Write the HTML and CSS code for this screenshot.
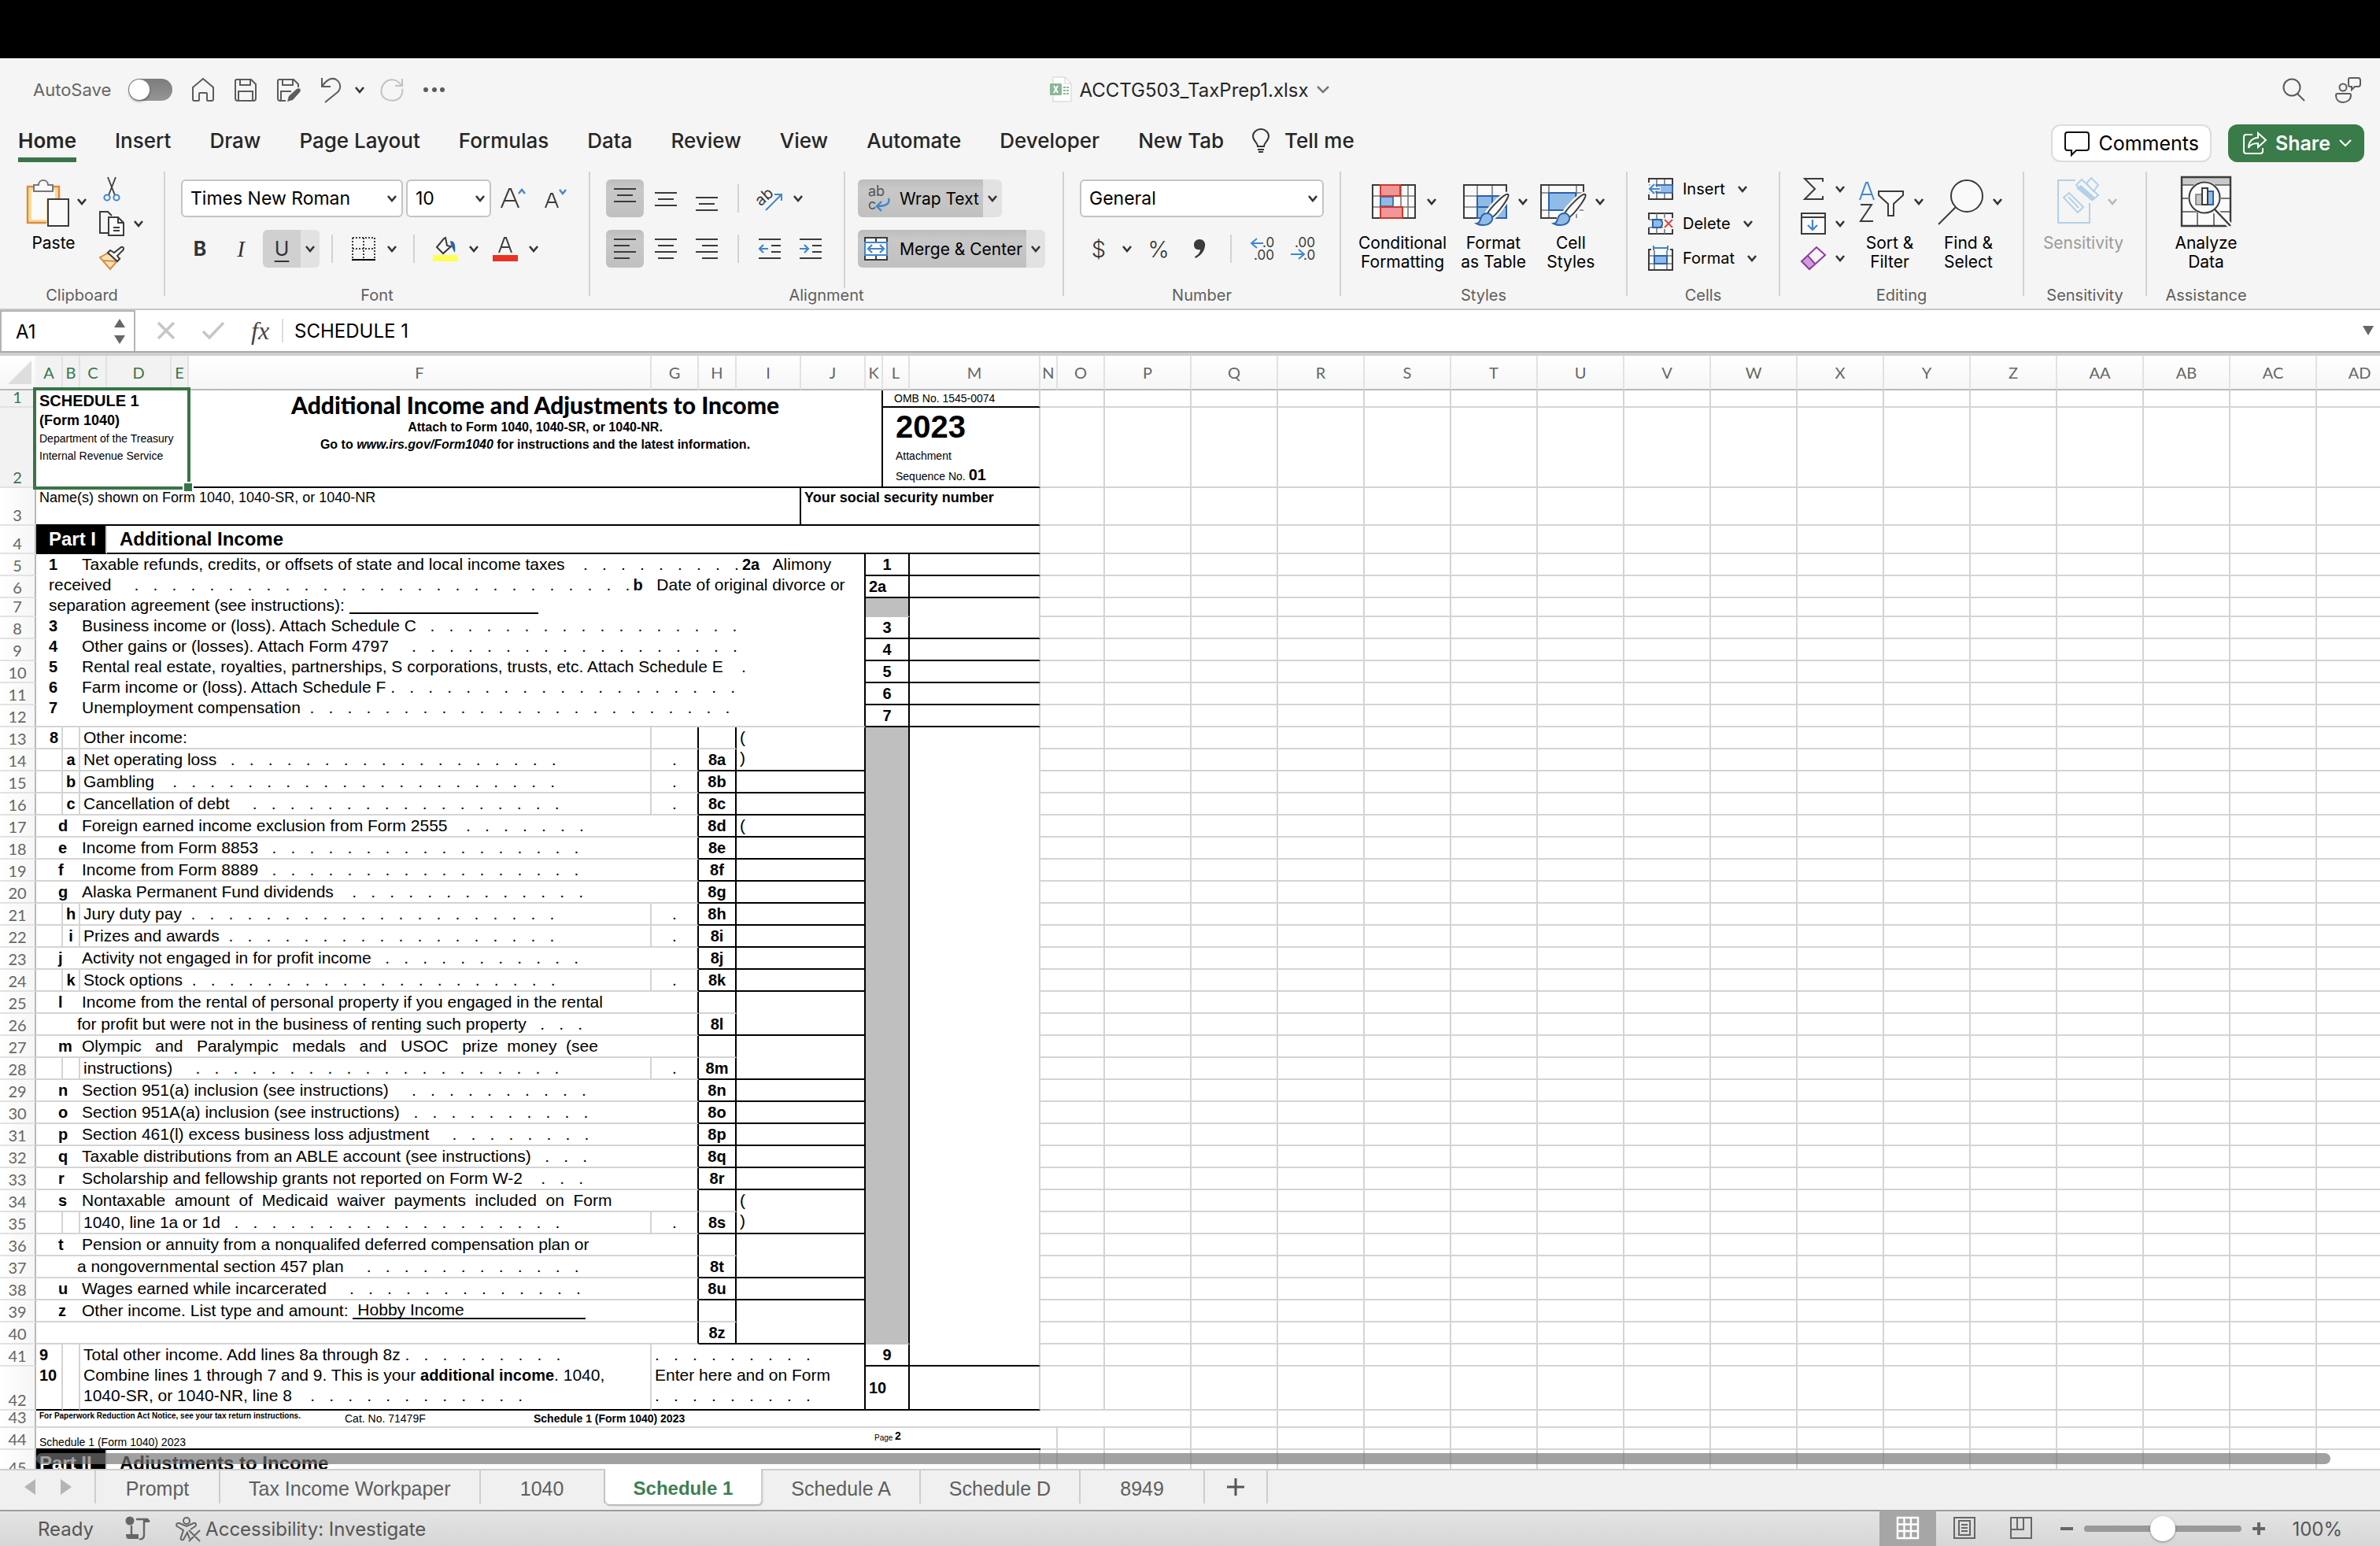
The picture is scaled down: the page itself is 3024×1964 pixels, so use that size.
FILE: index.html
```html
<!DOCTYPE html>
<html lang="en">
<head>
    <meta charset="UTF-8">
    <meta name="viewport" content="width=device-width, initial-scale=1.0">
    <title>ACCTG503_TaxPrep1.xlsx</title>
    <link rel="stylesheet" href="styles.css">
</head>
<body>
    <svg class="defs" aria-hidden="true">
        <symbol id="chev" viewBox="0 0 24 24"><path d="M7 9l5 6 5-6" fill="none" stroke="currentColor" stroke-width="2.6"/></symbol>
        <symbol id="brush" viewBox="0 0 60 64">
            <path d="M57 23c3 2-14 25-20 29l-6-5c4-7 22-26 26-24z" fill="#fafafa" stroke="#f5f5f5" stroke-width="7"/>
            <path d="M57 23c4 2-14 25-20 29l-6-5c4-7 22-26 26-24z" fill="#fafafa" stroke="#3b3b3b" stroke-width="2"/>
            <path d="M31 47c4 0 7 4 6 8-2 7-12 9-20 5 5-1 4-4 6-8 1-3 4-5 8-5z" fill="#90bbe6" stroke="#2a62ad" stroke-width="2"/>
        </symbol>
    </svg>

    <div class="notch"></div>

    <header class="titlebar">
        <div class="quick">
            <label for="autosave">AutoSave</label>
            <input type="checkbox" id="autosave" class="toggle">
            <button aria-label="Home"><svg width="30" height="32" viewBox="0 0 30 32"><path d="M2 13L15 2l13 11v15a2 2 0 0 1-2 2h-5a1 1 0 0 1-1-1v-8a1 1 0 0 0-1-1h-8a1 1 0 0 0-1 1v8a1 1 0 0 1-1 1H4a2 2 0 0 1-2-2z"/></svg></button>
            <button aria-label="Save"><svg width="30" height="32" viewBox="0 0 30 32"><path d="M4 3h18l6 6v18a3 3 0 0 1-3 3H5a3 3 0 0 1-3-3V5a2 2 0 0 1 2-2zM8 3v7h13V3M6 30V18h18v12"/></svg></button>
            <button aria-label="Save as"><svg width="32" height="32" viewBox="0 0 32 32"><path d="M12 30H5a3 3 0 0 1-3-3V5a2 2 0 0 1 2-2h18l6 6v4M8 3v7h13V3M6 30V18h13"/><path d="M14 31l2-7 10-9c4-2 6 1 4 4l-9 10z" fill="#5c5c5c" stroke="none"/></svg></button>
            <button aria-label="Undo"><svg width="28" height="34" viewBox="0 0 28 34"><path d="M2 2v11h11M2 13C8 4 14 1 20 4c6 4 7 11 2 16L6 33"/></svg></button>
            <button aria-label="Undo list" class="tight"><svg width="24" height="24"><use href="#chev"/></svg></button>
            <button aria-label="Redo" class="off"><svg width="30" height="32" viewBox="0 0 30 32"><path d="M19 11h9V2M27 11C22 2 12 1 6 7S0 23 6 27s15 4 20-2c2-3 3-6 2-10"/></svg></button>
            <button aria-label="More"><svg width="30" height="8" viewBox="0 0 30 8"><g fill="#5c5c5c" stroke="none"><circle cx="4" cy="4" r="3"/><circle cx="15" cy="4" r="3"/><circle cx="25" cy="4" r="3"/></g></svg></button>
        </div>
        <div class="filename">
            <svg width="28" height="34" viewBox="0 0 28 34"><path d="M4 1h15l8 8v23H4z" fill="#fff" stroke="#d0d0d0"/><path d="M19 1v8h8" fill="none" stroke="#d0d0d0"/><rect y="9" width="15" height="15" rx="1" fill="#8ab897"/><path d="M5 12l5 9M10 12l-5 9" stroke="#fff" stroke-width="2"/><path d="M17 13h3v2h-3zM21 13h3v2h-3zM17 17h3v2h-3zM21 17h3v2h-3zM17 21h3v2h-3zM21 21h3v2h-3z" fill="#8ab897"/></svg>
            <span>ACCTG503_TaxPrep1.xlsx</span>
            <svg width="18" height="14" viewBox="0 0 18 14"><path d="M2 3l7 7 7-7" fill="none" stroke="#777" stroke-width="2.5"/></svg>
        </div>
        <div class="corner">
            <button aria-label="Search"><svg width="30" height="32" viewBox="0 0 30 32"><circle cx="12" cy="13" r="10.5"/><path d="M19 21l9 9"/></svg></button>
            <button aria-label="Presence"><svg width="34" height="34" viewBox="0 0 34 34"><circle cx="11" cy="14" r="4.5"/><path d="M4 22h15a2 2 0 0 1 2 2c0 5-4 9-10 9S2 29 2 24a2 2 0 0 1 2-2zM20 2h10a3 3 0 0 1 3 3v5a3 3 0 0 1-3 3h-4l-4 4v-4h-2a2 2 0 0 1-2-2V4a2 2 0 0 1 2-2z"/></svg></button>
        </div>
    </header>

    <nav class="tabs">
        <a href="#" class="active">Home</a>
        <a href="#">Insert</a>
        <a href="#">Draw</a>
        <a href="#">Page Layout</a>
        <a href="#">Formulas</a>
        <a href="#">Data</a>
        <a href="#">Review</a>
        <a href="#">View</a>
        <a href="#">Automate</a>
        <a href="#">Developer</a>
        <a href="#">New Tab</a>
        <a href="#" class="tell"><svg width="24" height="32" viewBox="0 0 24 32"><path d="M8 23c0-5-6-7-6-13a10 9 0 0 1 20 0c0 6-6 8-6 13zM8 27h8M9 30h6" fill="none" stroke="#333" stroke-width="2"/></svg>Tell me</a>
        <button class="comments"><svg width="34" height="32" viewBox="0 0 34 32"><path d="M5 2h24a3 3 0 0 1 3 3v17a3 3 0 0 1-3 3H16l-6 6v-6H5a3 3 0 0 1-3-3V5a3 3 0 0 1 3-3z" fill="none" stroke="#111" stroke-width="2"/></svg>Comments</button>
        <button class="share"><svg width="32" height="30" viewBox="0 0 32 30"><path d="M13 4H5a3 3 0 0 0-3 3v18a3 3 0 0 0 3 3h18a3 3 0 0 0 3-3v-4M20 2l10 9-10 9v-5c-6 0-10 1-12 6 0-8 5-13 12-13z" fill="none" stroke="#fff" stroke-width="2"/></svg>Share<svg width="18" height="14" viewBox="0 0 18 14"><path d="M2 3l7 7 7-7" fill="none" stroke="#fff" stroke-width="2"/></svg></button>
    </nav>

    <div class="ribbon">
        <section class="group g-clipboard">
            <div class="controls">
                <button class="big">
                    <span class="pic"><svg width="54" height="64" viewBox="0 0 54 64"><path d="M1 13h40v46H1z" fill="#f3dc97"/><path d="M25 59H1V13h9M34 13h7v15" fill="none" stroke="#de8a3e" stroke-width="2.4"/><path d="M6 18h30v10H25v27H6z" fill="#fafafa"/><path d="M9 11h6c0-8 12-8 12 0h6v8H9z" fill="#fafafa" stroke="#777" stroke-width="2"/><path d="M27 29h26v34H27z" fill="#fafafa" stroke="#3b3b3b" stroke-width="2"/></svg><svg width="24" height="24"><use href="#chev"/></svg></span>
                    <span class="cap">Paste</span>
                </button>
                <div class="stack">
                    <button aria-label="Cut"><svg width="32" height="32" viewBox="0 0 32 32"><path d="M11 1l9 23M21 1l-9 23" fill="none" stroke="#3b3b3b" stroke-width="1.8"/><circle cx="10" cy="27" r="3.6" fill="none" stroke="#3f87cb" stroke-width="2"/><circle cx="22" cy="27" r="3.6" fill="none" stroke="#3f87cb" stroke-width="2"/></svg></button>
                    <button aria-label="Copy"><svg width="32" height="32" viewBox="0 0 32 32"><g fill="none" stroke="#3b3b3b" stroke-width="2"><path d="M11 28H1V1h10l5 5"/><path d="M12 8h12l7 7v16H12z" fill="#fafafa"/><path d="M24 8v7h7M18 21h8M18 25h8"/></g></svg><svg width="24" height="24"><use href="#chev"/></svg></button>
                    <button aria-label="Format painter"><svg width="32" height="32" viewBox="0 0 32 32"><path d="M10 10l-9 5 13 15 12-14z" fill="#f8e3b8" stroke="#de8a3e" stroke-width="2"/><path d="M5 19l17 1" stroke="#de8a3e" stroke-width="2"/><path d="M11 9l3-3 5 3 9-7c3-1 4 2 2 4l-7 7 3 4-3 3z" fill="#fafafa" stroke="#3b3b3b" stroke-width="2"/></svg></button>
                </div>
            </div>
            <h2>Clipboard</h2>
        </section>
        <i class="rule"></i>
        <section class="group g-font">
            <div class="controls rows">
                <div class="row">
                    <span class="field font-name"><select aria-label="Font"><option>Times New Roman</option></select><svg width="24" height="24"><use href="#chev"/></svg></span>
                    <span class="field font-size"><select aria-label="Font size"><option>10</option></select><svg width="24" height="24"><use href="#chev"/></svg></span>
                    <button class="tool" aria-label="Grow font"><svg width="32" height="30" viewBox="0 0 32 30"><path d="M1 27L11 3h2l10 24M5 18h14" fill="none" stroke="#3b3b3b" stroke-width="2"/><path d="M23 9l4-5 4 5" fill="none" stroke="#3f87cb" stroke-width="2.4"/></svg></button>
                    <button class="tool" aria-label="Shrink font"><svg width="32" height="30" viewBox="0 0 32 30"><path d="M5 27l7-18h2l7 18M8 20h10" fill="none" stroke="#3b3b3b" stroke-width="2"/><path d="M23 4l4 5 4-5" fill="none" stroke="#3f87cb" stroke-width="2.4"/></svg></button>
                </div>
                <div class="row">
                    <button class="tool bold">B</button>
                    <button class="tool italic">I</button>
                    <span class="split soft"><button class="tool underline">U</button><button class="drop" aria-label="Underline styles"><svg width="24" height="24"><use href="#chev"/></svg></button></span>
                    <i class="bar"></i>
                    <span class="split"><button class="tool" aria-label="Borders"><svg width="30" height="30" viewBox="0 0 30 30"><path d="M1 1h28M1 15h28M1 1v26M15 1v26M29 1v26" fill="none" stroke="#3b3b3b" stroke-width="2" stroke-dasharray="2 2"/><path d="M0 29h30" stroke="#000" stroke-width="2"/></svg></button><button class="drop" aria-label="More borders"><svg width="24" height="24"><use href="#chev"/></svg></button></span>
                    <i class="bar"></i>
                    <span class="split"><button class="tool" aria-label="Fill color"><svg width="32" height="32" viewBox="0 0 32 32"><path d="M5 14L14 3l2-1 2 10 5 1-10 9z" fill="#fafafa" stroke="#3b3b3b" stroke-width="2"/><path d="M22 6c6 0 7 6 6 15-2-3-5-8-6-15z" fill="#2a62ad"/><path d="M0 24h32v8H0z" fill="#ffff54"/></svg></button><button class="drop" aria-label="More fills"><svg width="24" height="24"><use href="#chev"/></svg></button></span>
                    <span class="split"><button class="tool" aria-label="Font color"><svg width="32" height="32" viewBox="0 0 32 32"><path d="M8 21L15 2h2l7 19M11 14h10" fill="none" stroke="#3b3b3b" stroke-width="2"/><path d="M0 24h32v8H0z" fill="#e93323"/></svg></button><button class="drop" aria-label="More colors"><svg width="24" height="24"><use href="#chev"/></svg></button></span>
                </div>
            </div>
            <h2>Font</h2>
        </section>
        <i class="rule"></i>
        <section class="group g-align">
            <div class="controls">
                <div class="rows align-part">
                    <div class="row">
                        <button class="tool on" aria-label="Top align"><svg width="28" height="30" viewBox="0 0 28 30"><path d="M0 3h28M4 11h20M0 19h28" stroke="#3b3b3b" stroke-width="2"/></svg></button>
                        <button class="tool" aria-label="Middle align"><svg width="28" height="30" viewBox="0 0 28 30"><path d="M0 8h28M4 16h20M0 24h28" stroke="#3b3b3b" stroke-width="2"/></svg></button>
                        <button class="tool" aria-label="Bottom align"><svg width="28" height="36" viewBox="0 0 28 36"><path d="M0 17h28M4 25h20M0 33h28" stroke="#3b3b3b" stroke-width="2"/></svg></button>
                        <i class="bar"></i>
                        <span class="split"><button class="tool" aria-label="Orientation"><svg width="34" height="32" viewBox="0 0 34 32"><text x="3" y="24" transform="rotate(-42 8 22)" font-family="Inter, sans-serif" font-size="20" fill="#3b3b3b">ab</text><path d="M12 31L32 11M23 11h9v8" fill="none" stroke="#3f87cb" stroke-width="2"/></svg></button><button class="drop" aria-label="More orientations"><svg width="24" height="24"><use href="#chev"/></svg></button></span>
                    </div>
                    <div class="row">
                        <button class="tool on" aria-label="Align left"><svg width="28" height="30" viewBox="0 0 28 30"><path d="M0 3h28M0 11h20M0 19h28M0 27h20" stroke="#3b3b3b" stroke-width="2"/></svg></button>
                        <button class="tool" aria-label="Align center"><svg width="28" height="30" viewBox="0 0 28 30"><path d="M0 3h28M4 11h20M0 19h28M4 27h20" stroke="#3b3b3b" stroke-width="2"/></svg></button>
                        <button class="tool" aria-label="Align right"><svg width="28" height="30" viewBox="0 0 28 30"><path d="M0 3h28M8 11h20M0 19h28M8 27h20" stroke="#3b3b3b" stroke-width="2"/></svg></button>
                        <i class="bar"></i>
                        <button class="tool" aria-label="Decrease indent"><svg width="28" height="30" viewBox="0 0 28 30"><path d="M0 3h28M16 11h12M16 19h12M0 27h28" stroke="#3b3b3b" stroke-width="2"/><path d="M12 15H1M6 10l-5 5 5 5" fill="none" stroke="#3f87cb" stroke-width="2.2"/></svg></button>
                        <button class="tool" aria-label="Increase indent"><svg width="28" height="30" viewBox="0 0 28 30"><path d="M0 3h28M16 11h12M16 19h12M0 27h28" stroke="#3b3b3b" stroke-width="2"/><path d="M0 15h11M6 10l5 5-5 5" fill="none" stroke="#3f87cb" stroke-width="2.2"/></svg></button>
                    </div>
                </div>
                <i class="rule"></i>
                <div class="rows wrap-part">
                    <div class="row">
                        <span class="split hard"><button class="wide"><svg width="32" height="38" viewBox="0 0 32 38"><text x="5" y="16" font-family="Inter, sans-serif" font-size="18" fill="#555">ab</text><text x="5" y="33" font-family="Inter, sans-serif" font-size="18" fill="#555">c</text><path d="M31 19c2 6-2 10-14 10M22 23l-6 6 6 6" fill="none" stroke="#3f87cb" stroke-width="2.4"/></svg>Wrap Text</button><button class="drop" aria-label="Wrap options"><svg width="24" height="24"><use href="#chev"/></svg></button></span>
                    </div>
                    <div class="row">
                        <span class="split hard"><button class="wide"><svg width="32" height="30" viewBox="0 0 32 30"><path d="M1 1h28v28H1zM15 1v28" fill="#fafafa" stroke="#3b3b3b" stroke-width="2"/><path d="M1 7h28v16H1z" fill="#fafafa" stroke="#3f87cb" stroke-width="2"/><path d="M5 15h20M10 10l-5 5 5 5M20 10l5 5-5 5" fill="none" stroke="#3f87cb" stroke-width="2.2"/></svg>Merge &amp; Center</button><button class="drop" aria-label="Merge options"><svg width="24" height="24"><use href="#chev"/></svg></button></span>
                    </div>
                </div>
            </div>
            <h2>Alignment</h2>
        </section>
        <i class="rule"></i>
        <section class="group g-number">
            <div class="controls rows">
                <div class="row">
                    <span class="field format"><select aria-label="Number format"><option>General</option></select><svg width="24" height="24"><use href="#chev"/></svg></span>
                </div>
                <div class="row">
                    <span class="split"><button class="tool sign">$</button><button class="drop" aria-label="Currencies"><svg width="24" height="24"><use href="#chev"/></svg></button></span>
                    <button class="tool sign">%</button>
                    <button class="tool" aria-label="Comma style"><svg width="18" height="28" viewBox="0 0 18 28"><path d="M9 2c5 0 8 4 7 9-1 7-6 12-12 15l-1-2c4-2 7-5 7-9-5 1-8-2-8-6s3-7 7-7z" fill="#3b3b3b"/></svg></button>
                    <i class="bar"></i>
                    <button class="tool" aria-label="Increase decimal"><svg width="32" height="32" viewBox="0 0 32 32"><g font-family="Inter, sans-serif" font-size="17" fill="#3b3b3b"><text x="16" y="14">.0</text><text x="5" y="30">.00</text></g><path d="M17 9H2M9 3L2 9l7 6" fill="none" stroke="#3f87cb" stroke-width="2"/></svg></button>
                    <button class="tool" aria-label="Decrease decimal"><svg width="32" height="32" viewBox="0 0 32 32"><g font-family="Inter, sans-serif" font-size="17" fill="#3b3b3b"><text x="5" y="14">.00</text><text x="16" y="30">.0</text></g><path d="M0 23h16M10 17l7 6-7 6" fill="none" stroke="#3f87cb" stroke-width="2"/></svg></button>
                </div>
            </div>
            <h2>Number</h2>
        </section>
        <i class="rule"></i>
        <section class="group g-styles">
            <div class="controls">
                <button class="big">
                    <span class="pic"><svg width="60" height="64" viewBox="0 0 60 64"><path d="M1 11h54v42H1z" fill="#fafafa"/><path d="M1 25h54M1 39h54M11 11v42M37 11v42M46 11v42" stroke="#777" stroke-width="1.6"/><path d="M1 11h54v42H1z" fill="none" stroke="#3b3b3b" stroke-width="2"/><path d="M11 26h16v12H11z" fill="#90bbe6" stroke="#2a62ad" stroke-width="1.6"/><path d="M11 11h25v14H11zM11 39h28v14H11z" fill="#f09598" stroke="#c93a2b" stroke-width="2"/></svg><svg width="24" height="24"><use href="#chev"/></svg></span>
                    <span class="cap">Conditional<br>Formatting</span>
                </button>
                <button class="big">
                    <span class="pic"><svg width="60" height="64" viewBox="0 0 60 64"><path d="M1 11h54v42H1z" fill="#fafafa"/><path d="M1 25h54M1 39h54M18 11v42M37 11v42" stroke="#777" stroke-width="1.6"/><path d="M1 11h54v42H1z" fill="none" stroke="#3b3b3b" stroke-width="2"/><path d="M18 25h37v28H18zM18 39h37M37 25v28" fill="#90bbe6" stroke="#2a62ad" stroke-width="2"/><use href="#brush"/></svg><svg width="24" height="24"><use href="#chev"/></svg></span>
                    <span class="cap">Format<br>as Table</span>
                </button>
                <button class="big">
                    <span class="pic"><svg width="60" height="64" viewBox="0 0 60 64"><path d="M1 11h54v42H1z" fill="#fafafa"/><path d="M1 21h54M1 43h54M11 11v42M46 11v42" stroke="#777" stroke-width="1.6"/><path d="M55 25V11H1v42h20" fill="none" stroke="#3b3b3b" stroke-width="2"/><path d="M11 21h34v22H11z" fill="#90bbe6" stroke="#2a62ad" stroke-width="2"/><use href="#brush"/></svg><svg width="24" height="24"><use href="#chev"/></svg></span>
                    <span class="cap">Cell<br>Styles</span>
                </button>
            </div>
            <h2>Styles</h2>
        </section>
        <i class="rule"></i>
        <section class="group g-cells">
            <div class="controls">
                <div class="stack">
                    <button><svg width="32" height="32" viewBox="0 0 32 32"><path d="M1 3h30v26H1z" fill="#fafafa"/><path d="M11 3v26M21 3v26M1 11h30M1 20h30" stroke="#777" stroke-width="1.6"/><path d="M1 8V3h30v26H1v-6" fill="none" stroke="#3b3b3b" stroke-width="2"/><path d="M11 11h20v10H11z" fill="#90bbe6" stroke="#2a62ad" stroke-width="1.6"/><path d="M16 16H2M8 9l-7 7 7 7" fill="none" stroke="#fafafa" stroke-width="5"/><path d="M15 16H2M8 10l-6 6 6 6" fill="none" stroke="#3f87cb" stroke-width="2.2"/></svg><span>Insert</span><svg width="24" height="24"><use href="#chev"/></svg></button>
                    <button><svg width="32" height="32" viewBox="0 0 32 32"><path d="M1 11V3h30v8M1 21v8h30v-8" fill="#fafafa" stroke="#3b3b3b" stroke-width="2"/><path d="M1 11h30M1 21h30M11 3v8M21 3v8M11 21v8M21 21v8" stroke="#777" stroke-width="1.6"/><path d="M6 11h10l3 5-3 5H6z" fill="#90bbe6" stroke="#2a62ad" stroke-width="2"/><path d="M19 9h13v14H19z" fill="#fafafa"/><path d="M21 11l10 10M31 11L21 21" stroke="#e4423a" stroke-width="2"/></svg><span>Delete</span><svg width="24" height="24"><use href="#chev"/></svg></button>
                    <button><svg width="32" height="32" viewBox="0 0 32 32"><path d="M1 5h30v26H1z" fill="#fafafa"/><path d="M8 6v24M24 6v24M1 13h30M1 23h30" stroke="#777" stroke-width="1.6"/><path d="M4 5H1v26h30V5h-3" fill="none" stroke="#3b3b3b" stroke-width="2"/><path d="M8 13h16v10H8z" fill="#90bbe6" stroke="#2a62ad" stroke-width="2"/><path d="M6 3h20M7 0v6M25 0v6" stroke="#3f87cb" stroke-width="2"/></svg><span>Format</span><svg width="24" height="24"><use href="#chev"/></svg></button>
                </div>
            </div>
            <h2>Cells</h2>
        </section>
        <i class="rule"></i>
        <section class="group g-editing">
            <div class="controls">
                <div class="stack">
                    <button aria-label="AutoSum"><svg width="32" height="32" viewBox="0 0 32 32"><path d="M28 7V3H5l13 13L5 29h23v-4" fill="none" stroke="#3b3b3b" stroke-width="2"/></svg><svg width="24" height="24"><use href="#chev"/></svg></button>
                    <button aria-label="Fill"><svg width="32" height="32" viewBox="0 0 32 32"><path d="M1 3h30v26H1zM1 8h30" fill="#fafafa" stroke="#3b3b3b" stroke-width="2"/><path d="M15 11v13M9 18l6 6 6-6" fill="none" stroke="#3f87cb" stroke-width="2.2"/></svg><svg width="24" height="24"><use href="#chev"/></svg></button>
                    <button aria-label="Clear"><svg width="32" height="32" viewBox="0 0 32 32"><path d="M8 14l9 9-6 7-10-10z" fill="#cf9bdb"/><path d="M20 2l11 10-20 18L1 20zM9 13l9 10" fill="none" stroke="#8f3aa0" stroke-width="2"/></svg><svg width="24" height="24"><use href="#chev"/></svg></button>
                </div>
                <button class="big">
                    <span class="pic"><svg width="60" height="64" viewBox="0 0 60 64"><path d="M1 30L9 8h2l8 22M4 23h12" fill="none" stroke="#3f87cb" stroke-width="2"/><path d="M2 36h14L2 57h16" fill="none" stroke="#3b3b3b" stroke-width="2"/><path d="M25 19h31v5L44 35v15h-7V35L25 24z" fill="#fafafa" stroke="#3b3b3b" stroke-width="2"/></svg><svg width="24" height="24"><use href="#chev"/></svg></span>
                    <span class="cap">Sort &amp;<br>Filter</span>
                </button>
                <button class="big">
                    <span class="pic"><svg width="60" height="64" viewBox="0 0 60 64"><circle cx="37" cy="25" r="20" fill="#fafafa" stroke="#3b3b3b" stroke-width="2"/><path d="M23 39L1 61" stroke="#3b3b3b" stroke-width="2"/></svg><svg width="24" height="24"><use href="#chev"/></svg></span>
                    <span class="cap">Find &amp;<br>Select</span>
                </button>
            </div>
            <h2>Editing</h2>
        </section>
        <i class="rule"></i>
        <section class="group g-sensitivity">
            <div class="controls">
                <button class="big" disabled>
                    <span class="pic"><svg width="60" height="64" viewBox="0 0 60 64"><g fill="none" stroke="#b3d0ea" stroke-width="2"><path d="M29 5H7v54h40V34"/><path d="M14 27l7-6 18 18-7 7zM20 26l13 14"/><path d="M30 11l7-7 21 20-7 6z" fill="#f5f5f5"/><path d="M43 9l6-7 9 9-6 8z" fill="#f5f5f5"/></g><path d="M30 15l6-4 18 16-5 4z" fill="#b3d0ea"/></svg><svg width="24" height="24"><use href="#chev"/></svg></span>
                    <span class="cap">Sensitivity</span>
                </button>
            </div>
            <h2>Sensitivity</h2>
        </section>
        <i class="rule"></i>
        <section class="group g-assist">
            <div class="controls">
                <button class="big plain">
                    <span class="pic"><svg width="64" height="64" viewBox="0 0 64 64"><path d="M1 1h62v62H1z" fill="#fafafa"/><path d="M1 1h62v10H1z" fill="#c9c9c9"/><path d="M1 11h62M1 28h62M1 45h62M21 45v18M42 45v18" stroke="#777" stroke-width="2"/><path d="M1 1h62v62H1z" fill="none" stroke="#3b3b3b" stroke-width="2.4"/><circle cx="30" cy="27" r="21" fill="#fafafa"/><path d="M42 42l22 22" stroke="#fafafa" stroke-width="7"/><path d="M19 23h8v13h-8z" fill="#c9c9c9" stroke="#777" stroke-width="1.6"/><path d="M34 19h7v17h-7z" fill="#90bbe6" stroke="#2a62ad" stroke-width="2"/><path d="M27 15h7v21h-7z" fill="#fafafa" stroke="#3b3b3b" stroke-width="2"/><circle cx="30" cy="27" r="19.5" fill="none" stroke="#3b3b3b" stroke-width="2"/><path d="M43 42l20 21" stroke="#3b3b3b" stroke-width="2.4"/></svg></span>
                    <span class="cap">Analyze<br>Data</span>
                </button>
            </div>
            <h2>Assistance</h2>
        </section>
    </div>

    <div class="formula-bar">
        <div class="name-box">
            <input type="text" value="A1" aria-label="Name box">
            <svg width="16" height="34" viewBox="0 0 16 34"><path d="M1 12L8 1l7 11zM1 22l7 11 7-11z" fill="#666"/></svg>
        </div>
        <button aria-label="Cancel"><svg width="24" height="24" viewBox="0 0 24 24"><path d="M2 2l20 20M22 2L2 22" stroke="#c6c6c6" stroke-width="3.5"/></svg></button>
        <button aria-label="Enter"><svg width="30" height="24" viewBox="0 0 30 24"><path d="M2 13l8 8L28 2" fill="none" stroke="#c6c6c6" stroke-width="3.5"/></svg></button>
        <button class="fx" aria-label="Insert function">fx</button>
        <input type="text" class="formula" value="SCHEDULE 1" aria-label="Formula">
        <svg class="expand" width="14" height="12" viewBox="0 0 14 12"><path d="M0 0h14L7 12z" fill="#666"/></svg>
    </div>

    <main class="sheet">
        <table id="grid">
            <colgroup>
                <col class="w-head"><col class="w34"><col class="w22"><col class="w34"><col class="w82"><col class="w22"><col class="w-f"><col class="w60"><col class="w-h"><col class="w82"><col class="w82"><col class="w22"><col class="w34"><col class="w-m"><col class="w22"><col class="w60">
                <col class="w110" span="15">
            </colgroup>
            <thead><tr id="letters"></tr></thead>
            <tbody>
                <tr class="r1" data-free="14"><td colspan="5" rowspan="2" class="top"><p class="s20 bold">SCHEDULE 1</p><p class="s18 bold">(Form 1040)</p><p class="s14">Department of the Treasury</p><p class="s14">Internal Revenue Service</p></td><td colspan="6" rowspan="2" class="top center kr kb"><p class="title">Additional Income and Adjustments to Income</p><p class="s16 bold">Attach to Form 1040, 1040-SR, or 1040-NR.</p><p class="s16 bold">Go to <em>www.irs.gov/Form1040</em> for instructions and the latest information.</p></td><td colspan="2" class="omb kb">OMB No. 1545-0074</td></tr>
                <tr class="r2" data-free="14"><td colspan="2" class="year kb"><p class="s40 bold">2023</p><p>Attachment</p><p>Sequence No. <b>01</b></p></td></tr>
                <tr class="r3" data-free="14"><td colspan="9" class="top s18 kr kb">Name(s) shown on Form 1040, 1040-SR, or 1040-NR</td><td colspan="4" class="top s18 bold kb">Your social security number</td></tr>
                <tr class="r4" data-free="14"><td colspan="3" class="part kb">Part I</td><td colspan="10" class="part-name kb">Additional Income</td></tr>
                <tr data-free="14"><td colspan="10" rowspan="8" class="top lines kr">
                        <p><b>1</b>Taxable refunds, credits, or offsets of state and local income taxes    <span class="dots" data-n="9"></span><strong>2a</strong>   Alimony</p>
                        <p>received     <span class="dots" data-n="27"></span><strong>b</strong>   Date of original divorce or</p>
                        <p>separation agreement (see instructions): <u class="blank"></u></p>
                        <p><b>3</b>Business income or (loss). Attach Schedule C   <span class="dots" data-n="17"></span></p>
                        <p><b>4</b>Other gains or (losses). Attach Form 4797     <span class="dots" data-n="18"></span></p>
                        <p><b>5</b>Rental real estate, royalties, partnerships, S corporations, trusts, etc. Attach Schedule E    <span class="dots" data-n="1"></span></p>
                        <p><b>6</b>Farm income or (loss). Attach Schedule F <span class="dots" data-n="19"></span></p>
                        <p><b>7</b>Unemployment compensation  <span class="dots" data-n="23"></span></p>
                    </td><td colspan="2" class="num kr kb">1</td><td class="kb"></td></tr>
                <tr data-free="14"><td colspan="2" class="num left kr kb">2a</td><td class="kb"></td></tr>
                <tr class="r7" data-free="14"><td colspan="2" class="grey kr"></td><td rowspan="2" class="kb"></td></tr>
                <tr data-free="14"><td colspan="2" class="num kr kb">3</td></tr>
                <tr data-free="14"><td colspan="2" class="num kr kb">4</td><td class="kb"></td></tr>
                <tr data-free="14"><td colspan="2" class="num kr kb">5</td><td class="kb"></td></tr>
                <tr data-free="14"><td colspan="2" class="num kr kb">6</td><td class="kb"></td></tr>
                <tr data-free="14"><td colspan="2" class="num kr kb">7</td><td class="kb"></td></tr>
                <tr data-free="14"><td class="a8">8</td><td></td><td colspan="4">Other income:</td><td class="kr"></td><td class="kr"></td><td colspan="2" rowspan="2" class="top kr kb"><p>(</p><p>)</p></td><td colspan="2" rowspan="28" class="grey kr"></td><td rowspan="29" class="kb"></td></tr>
                <tr data-free="14"><td></td><td class="num">a</td><td colspan="4">Net operating loss   <span class="dots" data-n="18"></span></td><td class="center kr">.</td><td class="num kr kb">8a</td></tr>
                <tr data-free="14"><td></td><td class="num">b</td><td colspan="4">Gambling    <span class="dots" data-n="21"></span></td><td class="center kr">.</td><td class="num kr kb">8b</td><td colspan="2" class="kr kb"></td></tr>
                <tr data-free="14"><td></td><td class="num">c</td><td colspan="4">Cancellation of debt     <span class="dots" data-n="17"></span></td><td class="center kr">.</td><td class="num kr kb">8c</td><td colspan="2" class="kr kb"></td></tr>
                <tr data-free="14"><td colspan="7" class="item kr"><b>d</b>Foreign earned income exclusion from Form 2555    <span class="dots" data-n="7"></span></td><td class="num kr kb">8d</td><td colspan="2" class="kr kb">(</td></tr>
                <tr data-free="14"><td colspan="7" class="item kr"><b>e</b>Income from Form 8853   <span class="dots" data-n="17"></span></td><td class="num kr kb">8e</td><td colspan="2" class="kr kb"></td></tr>
                <tr data-free="14"><td colspan="7" class="item kr"><b>f</b>Income from Form 8889   <span class="dots" data-n="17"></span></td><td class="num kr kb">8f</td><td colspan="2" class="kr kb"></td></tr>
                <tr data-free="14"><td colspan="7" class="item kr"><b>g</b>Alaska Permanent Fund dividends    <span class="dots" data-n="13"></span></td><td class="num kr kb">8g</td><td colspan="2" class="kr kb"></td></tr>
                <tr data-free="14"><td></td><td class="num">h</td><td colspan="4">Jury duty pay  <span class="dots" data-n="20"></span></td><td class="center kr">.</td><td class="num kr kb">8h</td><td colspan="2" class="kr kb"></td></tr>
                <tr data-free="14"><td></td><td class="num">i</td><td colspan="4">Prizes and awards  <span class="dots" data-n="18"></span></td><td class="center kr">.</td><td class="num kr kb">8i</td><td colspan="2" class="kr kb"></td></tr>
                <tr data-free="14"><td colspan="7" class="item kr"><b>j</b>Activity not engaged in for profit income   <span class="dots" data-n="11"></span></td><td class="num kr kb">8j</td><td colspan="2" class="kr kb"></td></tr>
                <tr data-free="14"><td></td><td class="num">k</td><td colspan="4">Stock options  <span class="dots" data-n="20"></span></td><td class="center kr">.</td><td class="num kr kb">8k</td><td colspan="2" class="kr kb"></td></tr>
                <tr data-free="14"><td colspan="7" class="item kr"><b>l</b>Income from the rental of personal property if you engaged in the rental</td><td class="kr"></td><td colspan="2" rowspan="2" class="kr kb"></td></tr>
                <tr data-free="14"><td colspan="7" class="cont kr">for profit but were not in the business of renting such property   <span class="dots" data-n="3"></span></td><td class="num kr kb">8l</td></tr>
                <tr data-free="14"><td colspan="7" class="item kr"><b>m</b>Olympic   and   Paralympic   medals   and   USOC   prize  money  (see</td><td class="kr"></td><td colspan="2" rowspan="2" class="kr kb"></td></tr>
                <tr data-free="14"><td></td><td></td><td colspan="4">instructions)     <span class="dots" data-n="20"></span></td><td class="center kr">.</td><td class="num kr kb">8m</td></tr>
                <tr data-free="14"><td colspan="7" class="item kr"><b>n</b>Section 951(a) inclusion (see instructions)     <span class="dots" data-n="10"></span></td><td class="num kr kb">8n</td><td colspan="2" class="kr kb"></td></tr>
                <tr data-free="14"><td colspan="7" class="item kr"><b>o</b>Section 951A(a) inclusion (see instructions)   <span class="dots" data-n="10"></span></td><td class="num kr kb">8o</td><td colspan="2" class="kr kb"></td></tr>
                <tr data-free="14"><td colspan="7" class="item kr"><b>p</b>Section 461(l) excess business loss adjustment     <span class="dots" data-n="8"></span></td><td class="num kr kb">8p</td><td colspan="2" class="kr kb"></td></tr>
                <tr data-free="14"><td colspan="7" class="item kr"><b>q</b>Taxable distributions from an ABLE account (see instructions)   <span class="dots" data-n="3"></span></td><td class="num kr kb">8q</td><td colspan="2" class="kr kb"></td></tr>
                <tr data-free="14"><td colspan="7" class="item kr"><b>r</b>Scholarship and fellowship grants not reported on Form W-2    <span class="dots" data-n="3"></span></td><td class="num kr kb">8r</td><td colspan="2" class="kr kb"></td></tr>
                <tr data-free="14"><td colspan="7" class="item kr"><b>s</b>Nontaxable  amount  of  Medicaid  waiver  payments  included  on  Form</td><td class="kr"></td><td colspan="2" rowspan="2" class="top kr kb"><p>(</p><p>)</p></td></tr>
                <tr data-free="14"><td></td><td></td><td colspan="4">1040, line 1a or 1d   <span class="dots" data-n="18"></span></td><td class="center kr">.</td><td class="num kr kb">8s</td></tr>
                <tr data-free="14"><td colspan="7" class="item kr"><b>t</b>Pension or annuity from a nonqualifed deferred compensation plan or</td><td class="kr"></td><td colspan="2" rowspan="2" class="kr kb"></td></tr>
                <tr data-free="14"><td colspan="7" class="cont kr">a nongovernmental section 457 plan     <span class="dots" data-n="12"></span></td><td class="num kr kb">8t</td></tr>
                <tr data-free="14"><td colspan="7" class="item kr"><b>u</b>Wages earned while incarcerated     <span class="dots" data-n="13"></span></td><td class="num kr kb">8u</td><td colspan="2" class="kr kb"></td></tr>
                <tr data-free="14"><td colspan="7" class="item kr"><b>z</b>Other income. List type and amount: <u class="hobby">Hobby Income</u></td><td class="kr"></td><td colspan="2" rowspan="2" class="kr kb"></td></tr>
                <tr data-free="14"><td colspan="7" class="kr"></td><td class="num kr kb">8z</td></tr>
                <tr data-free="14"><td rowspan="2" class="top bold s20 kb"><p>9</p><p>10</p></td><td rowspan="2" class="kb"></td><td colspan="4" rowspan="2" class="top kb"><p>Total other income. Add lines 8a through 8z <span class="dots" data-n="9"></span></p><p>Combine lines 1 through 7 and 9. This is your <strong>additional income</strong>. 1040,</p><p>1040-SR, or 1040-NR, line 8    <span class="dots" data-n="12"></span></p></td><td colspan="4" rowspan="2" class="top kr kb"><p><span class="dots" data-n="9"></span></p><p>Enter here and on Form</p><p><span class="dots" data-n="9"></span></p></td><td colspan="2" class="num kr kb">9</td></tr>
                <tr class="r42" data-free="14"><td colspan="2" class="num left kr kb">10</td><td class="kb"></td></tr>
                <tr class="r43" data-free="15"><td colspan="15" class="open"><div class="notice"><b>For Paperwork Reduction Act Notice, see your tax return instructions.</b><span>Cat. No. 71479F</span><strong>Schedule 1 (Form 1040) 2023</strong></div></td></tr>
                <tr class="r44" data-free="16"><td colspan="13" class="open kb"><div class="pager"><span>Schedule 1 (Form 1040) 2023</span><small>Page</small><b>2</b></div></td><td></td></tr>
                <tr class="r4" data-free="16"><td colspan="3" class="part second">Part II</td><td colspan="10" class="part-name">Adjustments to Income</td><td></td></tr>
            </tbody>
        </table>
        <div class="selection"><i></i></div>
        <div class="scrollbar"></div>
    </main>

    <nav class="sheet-tabs">
        <div class="arrows">
            <button aria-label="Previous sheets"><svg width="16" height="22" viewBox="0 0 16 22"><path d="M15 1v20L1 11z" fill="#b5b5b5"/></svg></button>
            <button aria-label="Next sheets"><svg width="16" height="22" viewBox="0 0 16 22"><path d="M1 1v20l14-10z" fill="#b5b5b5"/></svg></button>
        </div>
        <a href="#">Prompt</a>
        <a href="#">Tax Income Workpaper</a>
        <a href="#">1040</a>
        <a href="#" class="active">Schedule 1</a>
        <a href="#">Schedule A</a>
        <a href="#">Schedule D</a>
        <a href="#">8949</a>
        <button class="add" aria-label="New sheet"><svg width="22" height="22" viewBox="0 0 22 22"><path d="M11 0v22M0 11h22" stroke="#555" stroke-width="3"/></svg></button>
    </nav>

    <footer class="status">
        <span class="ready">Ready</span>
        <svg class="macro" width="32" height="32" viewBox="0 0 32 32"><circle cx="6" cy="6" r="5.5" fill="#666"/><path d="M8 12v12M14 4h14l3 3M24 4v20c0 5-4 6-6 5" fill="none" stroke="#666" stroke-width="2.4"/><path d="M1 23h16v6H4c-2 0-3-3-3-6zM24 3h5l2 5h-7z" fill="#666"/></svg>
        <svg width="32" height="32" viewBox="0 0 32 32"><g fill="none" stroke="#666" stroke-width="2"><circle cx="14" cy="6" r="4"/><path d="M18 29l-3-8-5 9c-3 1-4-1-3-3l3-9-8-5c-2-2 0-5 3-4l9 4 9-4c3-1 4 2 2 4l-6 4M17 18l14 14M31 18L17 32"/></g></svg>
        <span>Accessibility: Investigate</span>
        <div class="views">
            <button class="on" aria-label="Normal view"><svg width="28" height="28" viewBox="0 0 28 28"><path d="M1 1h26v26H1zM1 9.5h26M1 18h26M9.5 1v26M18 1v26" fill="none" stroke="#fff" stroke-width="2.4"/></svg></button>
            <button aria-label="Page layout view"><svg width="28" height="28" viewBox="0 0 28 28"><path d="M1 1h26v26H1zM7 5h14v18H7zM10 10h8M10 14h8M10 18h8" fill="none" stroke="#666" stroke-width="2"/></svg></button>
            <button aria-label="Page break view"><svg width="28" height="28" viewBox="0 0 28 28"><path d="M1 1h26v26H1zM1 16h16V1M9 1v15" fill="none" stroke="#666" stroke-width="2"/></svg></button>
        </div>
        <button aria-label="Zoom out"><svg width="16" height="16" viewBox="0 0 16 16"><path d="M0 8h16" stroke="#666" stroke-width="4"/></svg></button>
        <input type="range" min="0" max="100" value="50" aria-label="Zoom">
        <button aria-label="Zoom in"><svg width="16" height="16" viewBox="0 0 16 16"><path d="M0 8h16M8 0v16" stroke="#666" stroke-width="4"/></svg></button>
        <span class="percent">100%</span>
    </footer>

    <script>
        // column letters, A to E belong to the selected cell
        const letters = document.getElementById('letters');
        letters.innerHTML = '<th class="corner-cell"><svg width="32" height="32" viewBox="0 0 32 32"><path d="M31 1v30H1z" fill="#dedede"/></svg></th>';
        for (let i = 0; i < 30; i++) {
            const th = document.createElement('th');
            th.textContent = i < 26 ? String.fromCharCode(65 + i) : 'A' + String.fromCharCode(39 + i);
            if (i < 5) th.className = 'picked';
            letters.appendChild(th);
        }

        // row numbers and the empty cells to the right of the form
        document.querySelectorAll('#grid tbody tr').forEach((tr, i) => {
            const th = document.createElement('th');
            th.textContent = i + 1;
            if (i < 2) th.className = 'picked';
            tr.prepend(th);
            const free = Number(tr.dataset.free);
            if (free === 14) {
                const td = document.createElement('td');
                td.colSpan = 2;
                tr.appendChild(td);
            }
            const blanks = free === 16 ? 16 : 15;
            for (let j = 0; j < blanks; j++) tr.appendChild(document.createElement('td'));
        });

        document.querySelectorAll('.dots').forEach(el => {
            el.innerHTML = '<i>.</i>'.repeat(Number(el.dataset.n));
        });
    </script>
</body>
</html>
```
FILE: styles.css
```css
* {
    box-sizing: border-box;
}

body {
    margin: 0;
    height: 100vh;
    display: flex;
    flex-direction: column;
    overflow: hidden;
    background: #f5f5f5;
    font-family: Inter, "Liberation Sans", sans-serif;
    font-size: 20px;
    color: #262626;
}

button {
    display: flex;
    align-items: center;
    justify-content: center;
    padding: 0;
    border: 0;
    background: none;
    font: inherit;
    color: inherit;
}

a {
    color: inherit;
    text-decoration: none;
}

p, h2 {
    margin: 0;
}

svg {
    flex: none;
    display: block;
    overflow: visible;
}

.defs {
    position: absolute;
    width: 0;
    height: 0;
}

.notch {
    flex: none;
    height: 74px;
    background: #000;
}

/* title bar */
.titlebar {
    flex: none;
    height: 80px;
    padding: 0 24px;
    display: grid;
    grid-template-columns: 1fr auto 1fr;
    align-items: center;
}

.quick, .corner {
    display: flex;
    align-items: center;
    gap: 24px;
    font-size: 22px;
    color: #666;
}

.quick {
    margin-left: 18px;
}

.quick svg, .corner svg {
    fill: none;
    stroke: #5c5c5c;
    stroke-width: 2;
}

.quick .tight {
    margin: 0 -10px 0 -14px;
    color: #333;
}

.quick .off svg {
    stroke: #c2c2c2;
}

.toggle {
    appearance: none;
    width: 56px;
    height: 28px;
    margin: 0 0 0 -2px;
    border-radius: 14px;
    background: linear-gradient(#7c7c7c, #969696);
    position: relative;
}

.toggle::before {
    content: "";
    position: absolute;
    left: 1px;
    top: 1px;
    width: 26px;
    height: 26px;
    border-radius: 50%;
    background: #fff;
    box-shadow: 0 2px 3px rgba(0, 0, 0, 0.4);
}

.filename {
    display: flex;
    align-items: center;
    gap: 9px;
    font-size: 24px;
}

.corner {
    justify-content: flex-end;
    gap: 36px;
}

/* ribbon tabs */
.tabs {
    flex: none;
    height: 54px;
    padding: 0 20px 0 23px;
    display: flex;
    align-items: flex-start;
    gap: 49px;
    font-size: 26px;
    font-weight: 500;
    line-height: 50px;
}

.tabs .active {
    font-weight: 600;
    height: 52px;
    box-shadow: inset 0 -6px #397447;
}

.tabs .tell {
    display: flex;
    align-items: center;
    gap: 18px;
    margin-left: -14px;
}

.comments, .share {
    height: 48px;
    margin-top: 4px;
    border-radius: 12px;
    gap: 10px;
    font-size: 25px;
}

.comments {
    margin-left: auto;
    padding: 0 14px;
    background: #fff;
    border: 2px solid #dcdcdc;
    color: #000;
    font-weight: 400;
}

.share {
    margin-left: -28px;
    padding: 0 15px 0 18px;
    background: #397b49;
    color: #fff;
    font-weight: 600;
}

/* ribbon */
.ribbon {
    flex: none;
    height: 186px;
    padding-top: 10px;
    display: flex;
    border-bottom: 2px solid #c9c9c9;
}

.group {
    display: flex;
    flex-direction: column;
}

.group h2 {
    margin-top: 1px;
    text-align: center;
    font-size: 20px;
    line-height: 24px;
    font-weight: 400;
    color: #5e5e5e;
}

.rule {
    flex: none;
    width: 2px;
    height: 158px;
    background: #d2d2d2;
}

.controls {
    display: flex;
    height: 144px;
    color: #000;
}

.controls .rule {
    height: 148px;
}

.g-clipboard { width: 208px; }
.g-font { width: 538px; }
.g-align { width: 600px; }
.g-number { width: 350px; }
.g-styles { width: 362px; }
.g-cells { width: 192px; }
.g-editing { width: 308px; }
.g-sensitivity { width: 154px; }
.g-assist { width: 150px; }

.g-clipboard .controls { padding-left: 34px; gap: 10px; }
.g-styles .controls { padding-left: 22px; gap: 8px; }
.g-cells .controls, .g-editing .controls { padding-left: 26px; gap: 12px; }
.g-sensitivity .controls { padding-left: 36px; }
.g-assist .controls { justify-content: center; }

.big {
    flex-direction: column;
    justify-content: flex-start;
    padding-top: 6px;
    gap: 9px;
}

.big:disabled {
    color: #9b9b9b;
}

.pic {
    display: flex;
    align-items: center;
    gap: 4px;
}

.pic svg, .stack svg, .drop, .field svg {
    color: #333;
}

.big:disabled .pic svg {
    color: #b8b8b8;
}

.cap {
    padding-right: 10px;
    font-size: 21px;
    line-height: 24px;
    text-align: center;
}

.g-clipboard .cap {
    padding-right: 14px;
}

.plain .cap {
    padding-right: 0;
}

.g-sensitivity .cap {
    margin: 0 -20px;
}

.stack button {
    height: 44px;
    gap: 6px;
    justify-content: flex-start;
}

.stack span {
    padding: 0 4px 0 6px;
}

.rows {
    flex-direction: column;
    gap: 16px;
    padding: 10px 0 0 20px;
}

.align-part, .wrap-part {
    display: flex;
}

.align-part {
    width: 322px;
}

.wrap-part {
    padding-left: 16px;
}

.row {
    display: flex;
    align-items: center;
    gap: 4px;
    height: 48px;
}

.tool {
    width: 48px;
    height: 48px;
    color: #333;
}

.bar {
    width: 2px;
    height: 36px;
    margin: 0 11px;
    background: #d2d2d2;
}

.bold, .tool.bold {
    font-weight: 700;
}

.tool.bold, .tool.underline {
    font-size: 25px;
}

.tool.italic {
    font-family: "Liberation Serif", serif;
    font-style: italic;
    font-size: 29px;
}

.tool.underline {
    text-decoration: underline;
    text-underline-offset: 6px;
    text-decoration-thickness: 2px;
}

.tool.sign {
    font-size: 29px;
    font-weight: 300;
}

.tool.on {
    border-radius: 6px;
    background: linear-gradient(#bdbdbd, #c8c8c8 12px, #c0c0c0);
}

.split {
    display: flex;
    border-radius: 6px;
    overflow: hidden;
}

.drop {
    width: 24px;
    height: 48px;
}

.soft .tool {
    background: #d0d0d0;
}

.soft .drop, .hard .drop {
    background: #e2e2e2;
}

.wide {
    height: 48px;
    padding: 0 5px 0 8px;
    gap: 13px;
    font-size: 21px;
    background: linear-gradient(#bdbdbd, #c8c8c8 12px, #c0c0c0);
}

.field {
    position: relative;
    height: 48px;
}

.field select {
    appearance: none;
    width: 100%;
    height: 48px;
    padding: 0 10px;
    border: 2px solid #c4c4c4;
    border-radius: 6px;
    background: #fff;
    font: 23px Inter, sans-serif;
    color: #000;
}

.field svg {
    position: absolute;
    right: 2px;
    top: 12px;
}

.font-name { width: 282px; }
.font-size { width: 108px; }
.format { width: 310px; }

/* formula bar */
.formula-bar {
    flex: none;
    height: 54px;
    display: flex;
    align-items: center;
    border-bottom: 2px solid #a8a8a8;
    background: #fff;
    gap: 33px;
    padding-right: 8px;
}

.formula-bar input {
    border: 0;
    background: none;
    font: 24px Inter, sans-serif;
    color: #000;
}

.name-box {
    width: 172px;
    height: 52px;
    display: flex;
    align-items: center;
    justify-content: space-between;
    padding: 0 10px 0 16px;
    border: 2px solid #b3b3b3;
    border-width: 2px 2px 0;
}

.name-box input {
    width: 100px;
}

.name-box + button {
    margin-left: -6px;
}

.fx {
    font: italic 32px "Liberation Serif", serif;
    color: #444;
}

.formula-bar .formula {
    flex: 1;
    height: 30px;
    margin-left: -17px;
    padding-left: 14px;
    border-left: 2px solid #ddd;
}

/* sheet */
.sheet {
    flex: 1 1 0;
    min-height: 0;
    position: relative;
    overflow: hidden;
    border-top: 4px solid #cfcfcf;
    background: #fff;
    font-family: "Liberation Sans", sans-serif;
    color: #000;
}

#grid {
    width: 1px;
    table-layout: fixed;
    border-collapse: separate;
    border-spacing: 0;
}

.w-head { width: 46px; }
.w22 { width: 22px; }
.w34 { width: 34px; }
.w60 { width: 60px; }
.w82 { width: 82px; }
.w110 { width: 110px; }
.w-f { width: 588px; }
.w-h { width: 48px; }
.w-m { width: 166px; }

th {
    padding: 0;
    font: 20px/16px Lato, sans-serif;
    color: #666;
}

thead th {
    height: 44px;
    border-bottom: 2px solid #b8b8b8;
    border-right: 2px solid #e2e2e2;
    background: linear-gradient(#fff, #f6f6f6);
}

.corner-cell {
    border-right-color: #f6f6f6;
}

.corner-cell svg {
    margin-left: 9px;
}

tbody th {
    padding-bottom: 4px;
    vertical-align: bottom;
    border-bottom: 2px solid #e2e2e2;
    border-right: 2px solid #b8b8b8;
    background: linear-gradient(90deg, #fff, #f6f6f6);
}

th.picked {
    background: #f2f2f2;
    color: #397447;
}

tbody tr {
    height: 28px;
}

tbody .r1, tbody .r43 { height: 22px; }
tbody .r2 { height: 102px; }
tbody .r3 { height: 48px; }
tbody .r4 { height: 36px; }
tbody .r7 { height: 24px; }
tbody .r42 { height: 56px; }

td {
    padding: 0 4px;
    border-right: 2px solid #d4d4d4;
    border-bottom: 2px solid #d4d4d4;
    overflow: hidden;
    font-size: 21px;
    line-height: 26px;
    white-space: pre;
}

td.kr { border-right-color: #000; }
td.kb { border-bottom-color: #000; }
td.open { border-right: 0; }

.top { vertical-align: top; }
.center { text-align: center; }

.s14 { font-size: 14px; line-height: 22px; }
.s16 { font-size: 16px; line-height: 22px; }
.s18 { font-size: 18px; line-height: 24px; }
.s20 { font-size: 20px; }
.s40 { font-size: 40px; line-height: 48px; }

.title {
    font: 900 30px/36px Lato, sans-serif;
}

.omb {
    padding-left: 14px;
    font-size: 14px;
    line-height: 20px;
}

.year {
    padding-left: 16px;
    vertical-align: top;
    font-size: 14px;
}

.year b {
    font-size: 20px;
    line-height: 20px;
}

.part {
    padding-left: 16px;
    background: #000;
    color: #fff;
    font-size: 24px;
    font-weight: 700;
}

.part.second {
    padding-left: 4px;
}

.part-name {
    padding-left: 16px;
    font-size: 24px;
    font-weight: 700;
}

td.lines {
    padding-left: 16px;
    white-space: nowrap;
}

.lines p {
    white-space: pre;
}

.lines b {
    display: inline-block;
    width: 42px;
}

td b, td strong {
    font-size: 20px;
}

.item {
    padding-left: 28px;
}

.item b {
    display: inline-block;
    width: 30px;
}

.cont {
    padding-left: 52px;
}

.dots i {
    display: inline-block;
    width: 24px;
    font-style: normal;
}

.dots i:last-child {
    width: 10px;
}

.num {
    padding: 0;
    text-align: center;
    font-size: 20px;
    font-weight: 700;
}

.num.left {
    padding-left: 4px;
    text-align: left;
}

.a8 {
    text-align: right;
    font-size: 20px;
    font-weight: 700;
}

.grey {
    background: #bfbfbf;
}

td.grey {
    border-bottom-color: #bfbfbf;
}

u {
    display: inline-block;
    height: 24px;
    line-height: 24px;
    border-bottom: 2px solid #000;
    text-decoration: none;
    vertical-align: top;
}

.blank {
    width: 240px;
}

.hobby {
    width: 296px;
    padding-left: 6px;
}

.notice {
    display: grid;
    grid-template-columns: 388px 240px auto;
    font-size: 14px;
    line-height: 20px;
    overflow: hidden;
}

.notice b {
    font-size: 10px;
    line-height: 14px;
}

.notice strong {
    font-size: 14px;
}

.pager {
    display: grid;
    grid-template-columns: 1061px 26px auto;
    align-items: center;
    font-size: 14px;
}

.pager span {
    align-self: end;
    line-height: 16px;
}

.pager small {
    font-size: 10px;
}

.pager b {
    font-size: 14px;
    line-height: 20px;
    align-self: start;
}

.selection {
    position: absolute;
    left: 42px;
    top: 40px;
    width: 200px;
    height: 130px;
    border: 4px solid #397447;
}

.selection i {
    position: absolute;
    right: -8px;
    bottom: -8px;
    width: 14px;
    height: 14px;
    border: 2px solid #fff;
    background: #397447;
}

.scrollbar {
    position: absolute;
    left: 46px;
    right: 63px;
    bottom: 6px;
    height: 14px;
    border-radius: 7px;
    background: rgba(115, 115, 115, 0.67);
}

/* sheet tabs */
.sheet-tabs {
    flex: none;
    height: 52px;
    display: flex;
    border-top: 2px solid #cdcdcd;
    background: #f0f0f0;
    font: 25px/46px "Liberation Sans", sans-serif;
    color: #5e5e5e;
}

.arrows {
    display: flex;
    align-items: center;
    gap: 30px;
    padding: 0 30px;
    height: 42px;
    width: 122px;
    border-right: 2px solid #cdcdcd;
}

.sheet-tabs a, .add {
    height: 42px;
    min-width: 158px;
    padding: 0 36px;
    border-right: 2px solid #cdcdcd;
    text-align: center;
}

.sheet-tabs .active {
    height: 45px;
    margin-top: -2px;
    border-radius: 0 0 6px 6px;
    background: #fff;
    box-shadow: 0 2px 2px rgba(0, 0, 0, 0.25);
    font-size: 24px;
    line-height: 50px;
    font-weight: 700;
    color: #3d8050;
}

.sheet-tabs .add {
    min-width: 80px;
    padding: 0;
}

/* status bar */
.status {
    flex: none;
    height: 46px;
    padding: 0 48px;
    display: flex;
    align-items: center;
    border-top: 2px solid #9d9d9d;
    background: linear-gradient(#e4e4e4, #d6d6d6);
    font-size: 24px;
    color: #555;
}

.status svg + span {
    margin-left: 6px;
}

.macro {
    margin: 0 32px 0 40px;
}

.views {
    display: flex;
    margin: -2px 14px 0 auto;
}

.views button {
    width: 72px;
    height: 46px;
}

.views .on {
    background: #a6a6a6;
}

.status input {
    appearance: none;
    width: 200px;
    height: 8px;
    margin: 0 14px;
    border-radius: 4px;
    background: #999;
}

.status input::-webkit-slider-thumb {
    appearance: none;
    width: 32px;
    height: 32px;
    border-radius: 50%;
    background: #fff;
    box-shadow: 0 1px 3px rgba(0, 0, 0, 0.4);
}

.percent {
    margin-left: 34px;
}
```
